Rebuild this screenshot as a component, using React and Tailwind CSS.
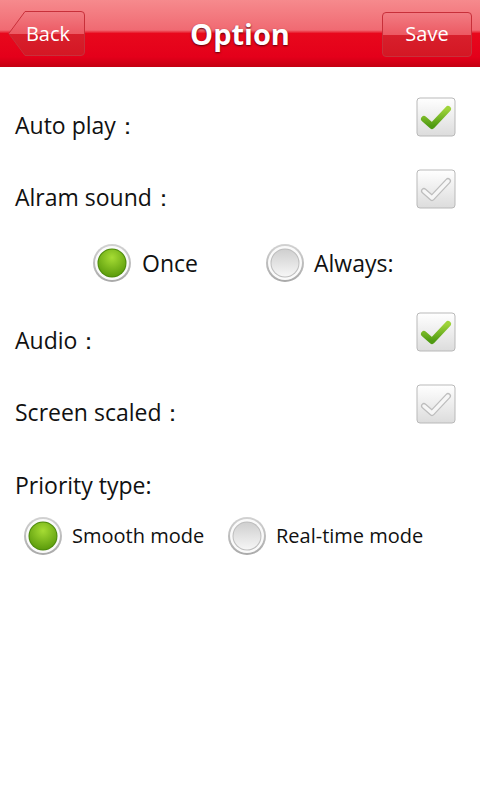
import React, { useState } from "react";

const font = { fontFamily: '"Open Sans", "Noto Sans", sans-serif' };

function CheckBox({ checked, onClick }) {
  return (
    <button onClick={onClick} className="w-[40px] h-[40px] p-0 -translate-y-[8px]">
      <svg width="40" height="40" viewBox="0 0 40 40">
        <defs>
          <linearGradient id="cbg" x1="0" y1="0" x2="0" y2="1">
            <stop offset="0" stopColor="#ffffff" />
            <stop offset="1" stopColor="#dcdcdc" />
          </linearGradient>
          <linearGradient id="ck" x1="0" y1="0" x2="0" y2="1">
            <stop offset="0" stopColor="#9fd43a" />
            <stop offset="1" stopColor="#4f9a12" />
          </linearGradient>
        </defs>
        <rect x="1" y="1" width="38" height="38" rx="3" fill="url(#cbg)" stroke="#b9b9b9" />
        {checked ? (
          <path
            d="M8 22 L16 29 L32 12"
            fill="none"
            stroke="url(#ck)"
            strokeWidth="6"
            strokeLinecap="round"
            strokeLinejoin="round"
          />
        ) : (
          <g fill="none" strokeLinecap="round" strokeLinejoin="round">
            <path d="M8 22 L16 29 L32 12" stroke="#bdbdbd" strokeWidth="6" />
            <path d="M8 22 L16 29 L32 12" stroke="#f6f6f6" strokeWidth="3.5" />
          </g>
        )}
      </svg>
    </button>
  );
}

function Radio({ on }) {
  return (
    <svg width="40" height="40" viewBox="0 0 40 40">
      <defs>
        <linearGradient id="ring" x1="0" y1="0" x2="0" y2="1">
          <stop offset="0" stopColor="#d2d2d2" />
          <stop offset="1" stopColor="#a9a9a9" />
        </linearGradient>
        <radialGradient id="gr" cx="0.5" cy="0.3" r="0.7">
          <stop offset="0" stopColor="#a6dc34" />
          <stop offset="1" stopColor="#5c9c0c" />
        </radialGradient>
        <linearGradient id="gy" x1="0" y1="0" x2="0" y2="1">
          <stop offset="0" stopColor="#cfcfcf" />
          <stop offset="1" stopColor="#f6f6f6" />
        </linearGradient>
      </defs>
      <circle cx="20" cy="20" r="19" fill="url(#ring)" />
      <circle cx="20" cy="20" r="17" fill="#fafafa" />
      <circle cx="20" cy="20" r="14.5" fill={on ? "#4c8a0a" : "#bdbdbd"} />
      <circle cx="20" cy="20" r="13.5" fill={on ? "url(#gr)" : "url(#gy)"} />
    </svg>
  );
}

function Row({ label, checked, onClick }) {
  return (
    <div className="h-[72px] flex items-center justify-between pl-[15px] pr-[24px]">
      <span className="text-[23px] text-[#111]">{label}</span>
      <CheckBox checked={checked} onClick={onClick} />
    </div>
  );
}

function App() {
  const [opts, setOpts] = useState({ auto: true, alarm: false, audio: true, scaled: false });
  const [alarmMode, setAlarmMode] = useState("once");
  const [priority, setPriority] = useState("smooth");
  const toggle = (k) => setOpts({ ...opts, [k]: !opts[k] });

  return (
    <div className="w-[480px] h-[800px] bg-white" style={font}>
      <div className="h-[67px] relative bg-[linear-gradient(to_bottom,#f68a8d_0%,#f06a72_45%,#e8081c_50%,#e4001a_85%,#c40012_100%)] flex items-center justify-between px-[8px]">
        <button className="relative h-[45px] w-[77px] flex items-center justify-end pr-[15px] text-white text-[20px]">
          <svg className="absolute left-0 top-0" width="77" height="45" viewBox="0 0 77 45">
            <defs>
              <linearGradient id="bb" x1="0" y1="0" x2="0" y2="1">
                <stop offset="0" stopColor="#f27c83" />
                <stop offset="0.5" stopColor="#ec5a63" />
                <stop offset="0.51" stopColor="#d8202c" />
                <stop offset="1" stopColor="#d41724" />
              </linearGradient>
            </defs>
            <path d="M17 0.5 H73 Q76.5 0.5 76.5 4 V41 Q76.5 44.5 73 44.5 H17 L0.8 22.5 Z" fill="url(#bb)" stroke="#c8303a" />
          </svg>
          <span className="relative">Back</span>
        </button>
        <div className="absolute left-0 right-0 top-0 h-[67px] flex items-center justify-center pointer-events-none">
          <span className="text-white font-bold text-[29px] [text-shadow:0_1px_2px_#5a0008]">Option</span>
        </div>
        <button className="h-[45px] w-[90px] mt-[1px] rounded-[4px] border border-[#c8303a] bg-[linear-gradient(to_bottom,#f27c83_0%,#ec5a63_50%,#d8202c_51%,#d41724_100%)] text-white text-[20px]">
          Save
        </button>
      </div>

      <div className="pt-[22px]">
        <Row label="Auto play：" checked={opts.auto} onClick={() => toggle("auto")} />
        <Row label="Alram sound：" checked={opts.alarm} onClick={() => toggle("alarm")} />
        <div className="h-[60px] mb-[11px] flex items-center pl-[92px]">
          <button onClick={() => setAlarmMode("once")} className="flex items-center gap-[10px] w-[173px]">
            <Radio on={alarmMode === "once"} />
            <span className="text-[23px] text-[#111]">Once</span>
          </button>
          <button onClick={() => setAlarmMode("always")} className="flex items-center gap-[9px]">
            <Radio on={alarmMode === "always"} />
            <span className="text-[23px] text-[#111]">Always:</span>
          </button>
        </div>
        <Row label="Audio：" checked={opts.audio} onClick={() => toggle("audio")} />
        <Row label="Screen scaled：" checked={opts.scaled} onClick={() => toggle("scaled")} />
        <div className="h-[60px] mt-[7px] flex items-center pl-[15px]">
          <span className="text-[23px] text-[#111]">Priority type:</span>
        </div>
        <div className="h-[42px] flex items-center pl-[23px]">
          <button onClick={() => setPriority("smooth")} className="flex items-center gap-[9px] w-[204px]">
            <Radio on={priority === "smooth"} />
            <span className="text-[20px] text-[#111]">Smooth mode</span>
          </button>
          <button onClick={() => setPriority("realtime")} className="flex items-center gap-[9px]">
            <Radio on={priority === "realtime"} />
            <span className="text-[20px] text-[#111]">Real-time mode</span>
          </button>
        </div>
      </div>
    </div>
  );
}

export default App;
